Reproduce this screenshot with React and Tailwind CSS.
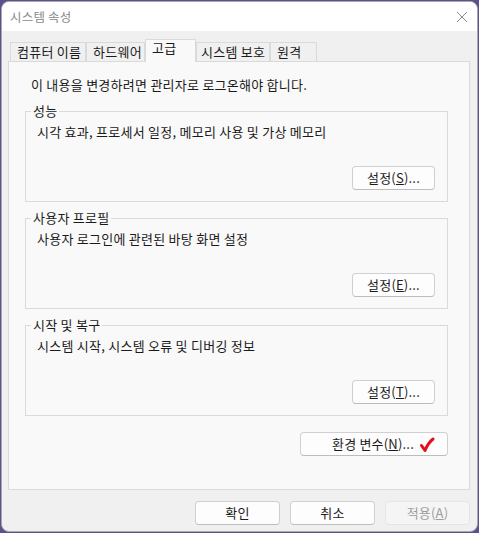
import React from "react";

const FONT = "font-['Noto_Sans_CJK_KR','Noto_Sans',sans-serif]";
const TXT = "text-[13px] leading-[16px] tracking-[0.25px] text-[#1b1b1b]";

function Btn({ children, className = "", disabled = false }) {
  return (
    <div
      className={
        "relative flex items-center justify-center h-[24px] rounded-[4px] border text-[13px] leading-[16px] tracking-[0.2px] " +
        (disabled
          ? "bg-[#f5f5f5] border-[#e5e5e5] text-[#9d9d9d] "
          : "bg-[#fdfdfd] border-[#d0d0d0] border-b-[#bdbdbd] text-[#1b1b1b] ") +
        className
      }
    >
      {children}
    </div>
  );
}

function Group({ title, desc, btn }) {
  return (
    <fieldset className="w-[423px] h-[99px] border border-[#dadada]">
      <legend className={`ml-[5px] px-[2px] ${TXT}`}>{title}</legend>
      <div className={`pl-[11px] pt-[5px] ${TXT}`}>{desc}</div>
      <div className="mt-[26px] flex justify-end pr-[12px]">
        <Btn className="w-[83px]">{btn}</Btn>
      </div>
    </fieldset>
  );
}

function Tab({ label, w, selected, pl = "pl-[6px]" }) {
  if (selected) {
    return (
      <div
        className={`relative z-10 -mb-px h-[23px] ${w} bg-[#f9f9f9] border border-b-0 border-[#dadada] flex items-start ${pl} ${TXT}`}
      >
        {label}
      </div>
    );
  }
  return (
    <div
      className={`h-[19px] ${w} bg-[#f0f0f0] border border-b-0 border-[#dadada] flex items-center ${pl} ${TXT}`}
    >
      {label}
    </div>
  );
}

export default function App() {
  return (
    <div className={`w-[479px] h-[533px] bg-[#5c5190] p-px ${FONT}`}>
      <div className="w-[477px] h-[531px] rounded-[8px] border border-[#a9a9a9] bg-[#f0f0f0] overflow-hidden flex flex-col">
        {/* Title bar */}
        <div className="h-[29px] bg-white flex items-center justify-between pl-[8px] pr-[8px] shrink-0">
          <span className="text-[12.5px] leading-[16px] tracking-[0.2px] text-[#8a8a8a]">시스템 속성</span>
          <svg width="12" height="12" viewBox="0 0 12 12" className="mr-[1px]">
            <path d="M1 1 L11 11 M11 1 L1 11" stroke="#8a8a8a" strokeWidth="1" fill="none" />
          </svg>
        </div>

        {/* Body */}
        <div className="flex-1 flex flex-col pt-[8px] pl-[6px] pr-[7px]">
          <div className="flex items-end h-[22px] pl-[2px]">
            <Tab label="컴퓨터 이름" w="w-[76px]" />
            <Tab label="하드웨어" w="w-[59px]" />
            <Tab label="고급" w="w-[51px]" selected />
            <Tab label="시스템 보호" w="w-[74px]" pl="pl-[4px]" />
            <Tab label="원격" w="w-[47px]" />
          </div>

          <div className="h-[429px] bg-[#f9f9f9] border border-[#dadada] flex flex-col pl-[16px]">
            <div className={`pl-[6px] pt-[15px] ${TXT}`}>
              이 내용을 변경하려면 관리자로 로그온해야 합니다.
            </div>
            <div className="mt-[10px] flex flex-col gap-[8px]">
              <Group
                title="성능"
                desc="시각 효과, 프로세서 일정, 메모리 사용 및 가상 메모리"
                btn={
                  <>
                    설정(<span className="underline">S</span>)...
                  </>
                }
              />
              <Group
                title="사용자 프로필"
                desc="사용자 로그인에 관련된 바탕 화면 설정"
                btn={
                  <>
                    설정(<span className="underline">E</span>)...
                  </>
                }
              />
              <Group
                title="시작 및 복구"
                desc="시스템 시작, 시스템 오류 및 디버깅 정보"
                btn={
                  <>
                    설정(<span className="underline">T</span>)...
                  </>
                }
              />
            </div>
            <div className="mt-[16px] w-[423px] flex justify-end">
              <Btn className="w-[148px]">
                <span className="-ml-[2px]">
                  환경 변수(<span className="underline">N</span>)...
                </span>
                <svg
                  width="16"
                  height="16"
                  viewBox="0 0 16 16"
                  className="absolute right-[12px] top-[4px]"
                >
                  <path
                    d="M2.5 8.5 L6 13.5 Q9 6 14 2"
                    stroke="#e3101c"
                    strokeWidth="3"
                    strokeLinecap="round"
                    strokeLinejoin="round"
                    fill="none"
                  />
                </svg>
              </Btn>
            </div>
          </div>

          <div className="flex justify-end gap-[10px] pt-[11px]">
            <Btn className="w-[85px]">확인</Btn>
            <Btn className="w-[85px]">취소</Btn>
            <Btn className="w-[85px]" disabled>
              적용(<span className="underline">A</span>)
            </Btn>
          </div>
        </div>
      </div>
    </div>
  );
}
